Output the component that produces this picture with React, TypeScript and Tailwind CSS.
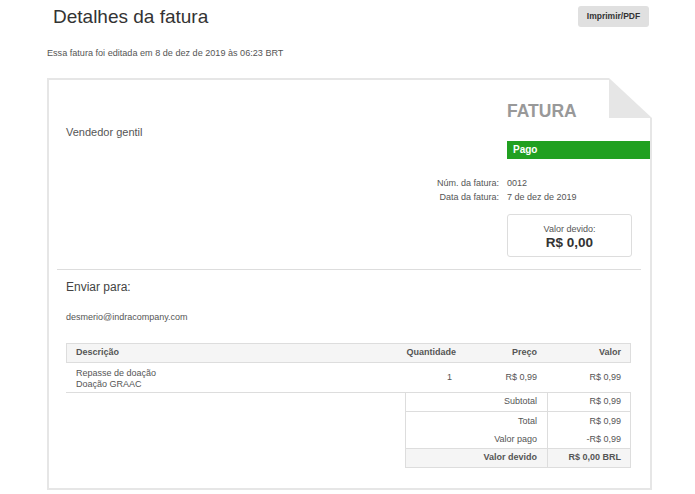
import React from "react";

export default function App() {
  return (
    <div className="w-[695px] h-[494px] overflow-hidden bg-white font-['Liberation_Sans',Arial,sans-serif] text-[#333]">
      <div className="ml-[47px] w-[605px]">
        <div className="flex items-start justify-between">
          <h1 className="ml-[6px] mt-[6px] text-[19px] leading-[22px] text-[#333]">Detalhes da fatura</h1>
          <button className="mr-[3px] mt-[6px] h-[21px] w-[71px] rounded-[3px] bg-[#e0e0e0] text-[8.5px] font-bold text-[#333]">
            Imprimir/PDF
          </button>
        </div>
        <p className="mt-[19px] text-[9.1px] leading-[12px] text-[#555]">
          Essa fatura foi editada em 8 de dez de 2019 às 06:23 BRT
        </p>

        <div className="relative mt-[19px] border-2 border-[#e6e6e6]">
          <div className="absolute -right-[2px] -top-[2px] h-[40px] w-[43px]">
            <svg width="43" height="40" viewBox="0 0 43 40">
              <rect x="0" y="0" width="43" height="40" fill="#ffffff" />
              <polygon points="0,0 0,40 43,40" fill="#e6e6e6" />
            </svg>
          </div>

          <div className="flex">
            <div className="flex-1 pl-[17px] pt-[45px] text-[11px] leading-[14px] text-[#555]">Vendedor gentil</div>
            <div className="w-[143px] pt-[21px]">
              <div className="text-[17.5px] font-bold leading-[20px] text-[#999]">FATURA</div>
              <div className="mt-[20px] h-[18px] bg-[#21a021] pl-[6px] text-[10px] font-bold leading-[18px] text-white">
                Pago
              </div>
            </div>
          </div>

          <div className="mt-[17px] grid grid-cols-[1fr_143px] gap-x-[8px] text-[9px] leading-[14px] text-[#555]">
            <div className="text-right">Núm. da fatura:</div>
            <div>0012</div>
            <div className="text-right">Data da fatura:</div>
            <div>7 de dez de 2019</div>
          </div>

          <div className="ml-auto mr-[18px] mt-[10px] h-[43px] w-[125px] rounded-[3px] border border-[#ddd] pt-[9px] text-center">
            <div className="text-[9px] leading-[11px] text-[#555]">Valor devido:</div>
            <div className="text-[13.5px] font-bold leading-[15px] text-[#333]">R$ 0,00</div>
          </div>

          <div className="ml-[8px] mr-[9px] mt-[12px] h-px bg-[#ddd]" />

          <div className="px-[17px] pb-[20px]">
            <div className="mt-[10px] text-[12px] leading-[15px] text-[#444]">Enviar para:</div>
            <div className="mt-[16px] text-[9px] leading-[12px] text-[#555]">desmerio@indracompany.com</div>

            <div className="mt-[20px] w-[565px] text-[9px] text-[#555]">
              <div className="grid h-[20px] grid-cols-[1fr_100px_81px_83px] items-center border border-[#ddd] bg-[#f5f5f5] font-bold">
                <div className="pl-[9px]">Descrição</div>
                <div className="pr-[10px] text-right">Quantidade</div>
                <div className="pr-[10px] text-right">Preço</div>
                <div className="pr-[9px] text-right">Valor</div>
              </div>
              <div className="grid h-[30px] grid-cols-[1fr_100px_81px_83px] items-center border-b border-[#ddd] px-px">
                <div className="self-start pl-[9px] pt-[5px] leading-[11px]">
                  <div>Repasse de doação</div>
                  <div>Doação GRAAC</div>
                </div>
                <div className="pr-[14px] text-right">1</div>
                <div className="pr-[10px] text-right">R$ 0,99</div>
                <div className="pr-[9px] text-right">R$ 0,99</div>
              </div>

              <div className="ml-auto w-[226px]">
                <div className="grid h-[19px] grid-cols-[141px_83px] items-center border-x border-b border-[#ddd]">
                  <div className="pr-[10px] text-right">Subtotal</div>
                  <div className="flex h-full items-center justify-end border-l border-[#ddd] pr-[9px]">R$ 0,99</div>
                </div>
                <div className="grid h-[19px] grid-cols-[141px_83px] items-center border-x border-[#ddd]">
                  <div className="pr-[10px] text-right">Total</div>
                  <div className="flex h-full items-center justify-end border-l border-[#ddd] pr-[9px]">R$ 0,99</div>
                </div>
                <div className="grid h-[18px] grid-cols-[141px_83px] items-center border-x border-b border-[#ddd]">
                  <div className="pr-[10px] text-right">Valor pago</div>
                  <div className="flex h-full items-center justify-end border-l border-[#ddd] pr-[9px]">-R$ 0,99</div>
                </div>
                <div className="grid h-[19px] grid-cols-[141px_83px] items-center border-x border-b border-[#ddd] bg-[#f5f5f5] font-bold">
                  <div className="pr-[10px] text-right">Valor devido</div>
                  <div className="flex h-full items-center justify-end border-l border-[#ddd] pr-[9px]">R$ 0,00 BRL</div>
                </div>
              </div>
            </div>
          </div>
        </div>
      </div>
    </div>
  );
}
